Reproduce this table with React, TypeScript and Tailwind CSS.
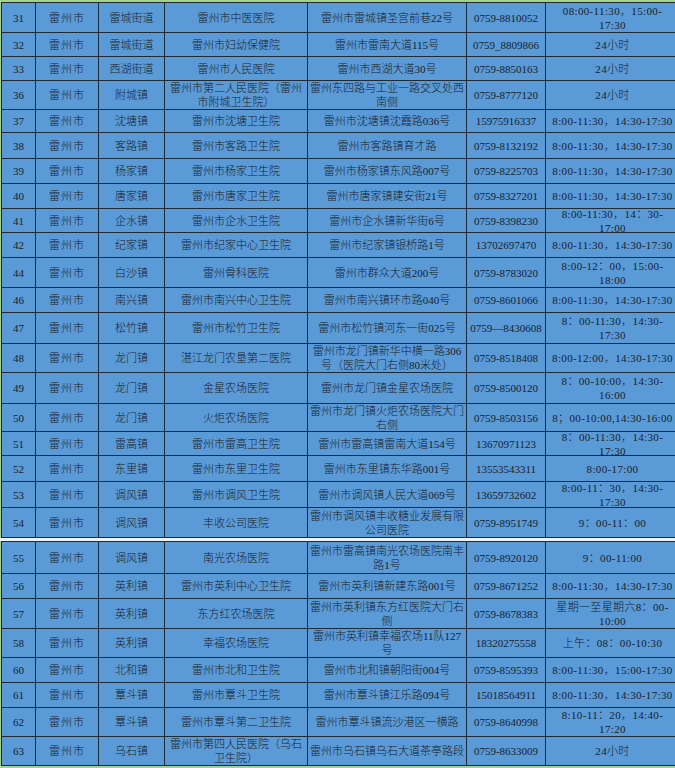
type Row = {
  no: string
  city: string
  town: string
  name: string[]
  addr: string[]
  tel: string
  time: string[]
  h: number
}

const FULL = '8:00-11:30，14:30-17:30'

const partOne: Row[] = [
  { no: '31', city: '雷州市', town: '雷城街道', name: ['雷州市中医医院'], addr: ['雷州市雷城镇圣宫前巷22号'], tel: '0759-8810052', time: ['08:00-11:30，15:00-', '17:30'], h: 30 },
  { no: '32', city: '雷州市', town: '雷城街道', name: ['雷州市妇幼保健院'], addr: ['雷州市雷南大道115号'], tel: '0759_8809866', time: ['24小时'], h: 24 },
  { no: '33', city: '雷州市', town: '西湖街道', name: ['雷州市人民医院'], addr: ['雷州市西湖大道30号'], tel: '0759-8850163', time: ['24小时'], h: 24 },
  { no: '36', city: '雷州市', town: '附城镇', name: ['雷州市第二人民医院（雷州', '市附城卫生院）'], addr: ['雷州东四路与工业一路交叉处西', '南侧'], tel: '0759-8777120', time: ['24小时'], h: 29 },
  { no: '37', city: '雷州市', town: '沈塘镇', name: ['雷州市沈塘卫生院'], addr: ['雷州市沈塘镇沈霞路036号'], tel: '15975916337', time: [FULL], h: 23 },
  { no: '38', city: '雷州市', town: '客路镇', name: ['雷州市客路卫生院'], addr: ['雷州市客路镇育才路'], tel: '0759-8132192', time: [FULL], h: 26 },
  { no: '39', city: '雷州市', town: '杨家镇', name: ['雷州市杨家卫生院'], addr: ['雷州市杨家镇东风路007号'], tel: '0759-8225703', time: [FULL], h: 25 },
  { no: '40', city: '雷州市', town: '唐家镇', name: ['雷州市唐家卫生院'], addr: ['雷州市唐家镇建安街21号'], tel: '0759-8327201', time: [FULL], h: 25 },
  { no: '41', city: '雷州市', town: '企水镇', name: ['雷州市企水卫生院'], addr: ['雷州市企水镇新华街6号'], tel: '0759-8398230', time: ['8:00-11:30，14：30-', '17:00'], h: 24 },
  { no: '42', city: '雷州市', town: '纪家镇', name: ['雷州市纪家中心卫生院'], addr: ['雷州市纪家镇银桥路1号'], tel: '13702697470', time: [FULL], h: 25 },
  { no: '44', city: '雷州市', town: '白沙镇', name: ['雷州骨科医院'], addr: ['雷州市群众大道200号'], tel: '0759-8783020', time: ['8:00-12：00，15:00-', '18:00'], h: 30 },
  { no: '46', city: '雷州市', town: '南兴镇', name: ['雷州市南兴中心卫生院'], addr: ['雷州市南兴镇环市路040号'], tel: '0759-8601066', time: [FULL], h: 25 },
  { no: '47', city: '雷州市', town: '松竹镇', name: ['雷州市松竹卫生院'], addr: ['雷州市松竹镇河东一街025号'], tel: '0759—8430608', time: ['8：00-11:30，14:30-', '17:30'], h: 31 },
  { no: '48', city: '雷州市', town: '龙门镇', name: ['湛江龙门农垦第二医院'], addr: ['雷州市龙门镇新华中横一路306', '号（医院大门右侧80米处）'], tel: '0759-8518408', time: ['8:00-12:00，14:30-17:30'], h: 29 },
  { no: '49', city: '雷州市', town: '龙门镇', name: ['金星农场医院'], addr: ['雷州市龙门镇金星农场医院'], tel: '0759-8500120', time: ['8：00-10:00，14:30-', '16:00'], h: 31 },
  { no: '50', city: '雷州市', town: '龙门镇', name: ['火炬农场医院'], addr: ['雷州市龙门镇火炬农场医院大门', '右侧'], tel: '0759-8503156', time: ['8；00-10:00,14:30-16:00'], h: 28 },
  { no: '51', city: '雷州市', town: '雷高镇', name: ['雷州市雷高卫生院'], addr: ['雷州市雷高镇雷南大道154号'], tel: '13670971123', time: ['8：00-11:30，14:30-', '17:30'], h: 24 },
  { no: '52', city: '雷州市', town: '东里镇', name: ['雷州市东里卫生院'], addr: ['雷州市东里镇东华路001号'], tel: '13553543311', time: ['8:00-17:00'], h: 26 },
  { no: '53', city: '雷州市', town: '调风镇', name: ['雷州市调风卫生院'], addr: ['雷州市调风镇人民大道069号'], tel: '13659732602', time: ['8:00-11：30，14:30-', '17:30'], h: 26 },
  { no: '54', city: '雷州市', town: '调风镇', name: ['丰收公司医院'], addr: ['雷州市调风镇丰收糖业发展有限', '公司医院'], tel: '0759-8951749', time: ['9：00-11：00'], h: 30 },
]

const partTwo: Row[] = [
  { no: '55', city: '雷州市', town: '调风镇', name: ['南光农场医院'], addr: ['雷州市雷高镇南光农场医院南丰', '路1号'], tel: '0759-8920120', time: ['9：00-11:00'], h: 32 },
  { no: '56', city: '雷州市', town: '英利镇', name: ['雷州市英利中心卫生院'], addr: ['雷州市英利镇新建东路001号'], tel: '0759-8671252', time: [FULL], h: 25 },
  { no: '57', city: '雷州市', town: '英利镇', name: ['东方红农场医院'], addr: ['雷州市英利镇东方红医院大门右', '侧'], tel: '0759-8678383', time: ['星期一至星期六8：00-', '10:00'], h: 30 },
  { no: '58', city: '雷州市', town: '英利镇', name: ['幸福农场医院'], addr: ['雷州市英利镇幸福农场11队127', '号'], tel: '18320275558', time: ['上午：08：00-10:30'], h: 29 },
  { no: '60', city: '雷州市', town: '北和镇', name: ['雷州市北和卫生院'], addr: ['雷州市北和镇朝阳街004号'], tel: '0759-8595393', time: ['8:00-11:30，15:00-17:30'], h: 25 },
  { no: '61', city: '雷州市', town: '覃斗镇', name: ['雷州市覃斗卫生院'], addr: ['雷州市覃斗镇江乐路094号'], tel: '15018564911', time: [FULL], h: 25 },
  { no: '62', city: '雷州市', town: '覃斗镇', name: ['雷州市覃斗第二卫生院'], addr: ['雷州市覃斗镇流沙港区一横路'], tel: '0759-8640998', time: ['8:10-11：20，14:40-', '17:20'], h: 29 },
  { no: '63', city: '雷州市', town: '乌石镇', name: ['雷州市第四人民医院（乌石', '卫生院）'], addr: ['雷州市乌石镇乌石大道茶亭路段'], tel: '0759-8633009', time: ['24小时'], h: 29 },
]

function Cell({ lines, w }: { lines: string[]; w: string }) {
  return (
    <div
      className={`${w} flex shrink-0 flex-col items-center justify-center overflow-hidden whitespace-nowrap border-r border-[#1d2a38] text-center leading-[14px]`}
    >
      {lines.map((l, i) => (
        <span key={i}>{l}</span>
      ))}
    </div>
  )
}

function TableRow({ r }: { r: Row }) {
  return (
    <div className="flex border-b border-[#1d2a38]" style={{ height: r.h }}>
      <Cell w="w-[34px]" lines={[r.no]} />
      <Cell w="w-[63px] tracking-[1px]" lines={[r.city]} />
      <Cell w="w-[66px]" lines={[r.town]} />
      <Cell w="w-[143px]" lines={r.name} />
      <Cell w="w-[159px]" lines={r.addr} />
      <Cell w="w-[79px]" lines={[r.tel]} />
      <Cell w="w-[134px] tracking-[0.35px]" lines={r.time} />
    </div>
  )
}

function Block({ rows }: { rows: Row[] }) {
  return (
    <div className="ml-px w-[678px] border-l border-t border-[#1d2a38] bg-[#5a9ad6]">
      {rows.map((r) => (
        <TableRow key={r.no} r={r} />
      ))}
    </div>
  )
}

export default function App() {
  return (
    <div
      className="h-[768px] w-[675px] overflow-hidden bg-[#a8d08d] text-[11px] font-light text-[#18222e]"
      style={{ fontFamily: '"Liberation Serif", "Noto Sans CJK SC", serif' }}
    >
      <div className="h-[2px]" />
      <Block rows={partOne} />
      <div className="h-[3px] bg-[#eef2f6]" />
      <Block rows={partTwo} />
    </div>
  )
}
